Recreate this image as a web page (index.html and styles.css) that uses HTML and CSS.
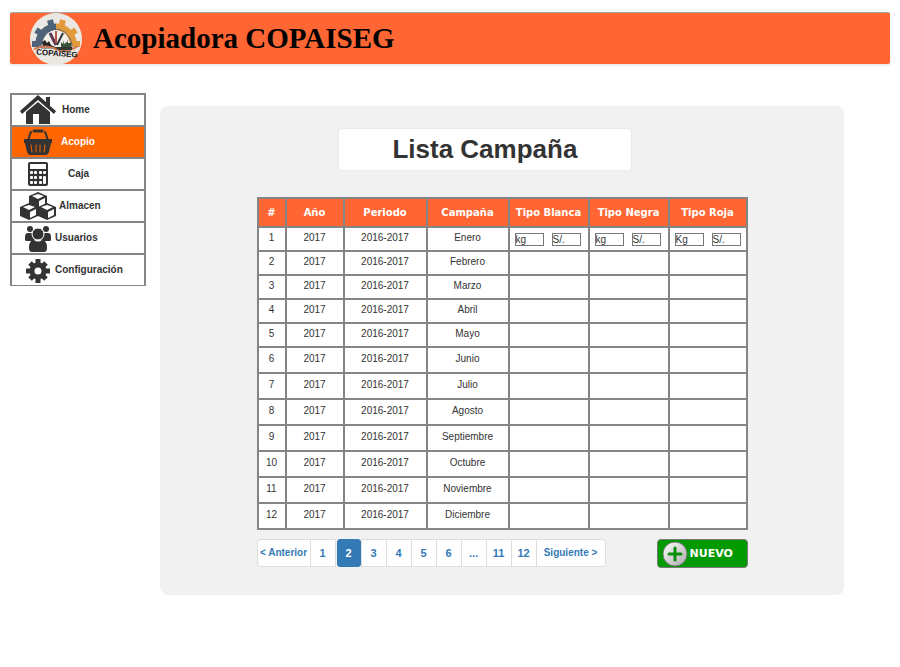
FILE: index.html
```html
<!DOCTYPE html>
<html lang="es">
<head>
<meta charset="utf-8">
<meta name="viewport" content="width=device-width, initial-scale=1">
<title>Acopiadora COPAISEG</title>
<link rel="stylesheet" href="styles.css">
</head>
<body>
<header class="topbar">
  <svg class="logo" viewBox="0 0 52 52" role="img" aria-label="COPAISEG">
    <circle cx="26" cy="26" r="26" fill="#ebe8e3"/>
    <g stroke="#4f6378" fill="none"><path d="M9 33a17 17 0 0 1 17-19" stroke-width="7"/><path d="M9 31H2M12 21L6 17M22 15l-2-8" stroke-width="6"/></g>
    <g stroke="#e39a3c" fill="none"><path d="M26 14a17 17 0 0 1 17 19" stroke-width="7"/><path d="M43 31h7M40 21l6-4M31 15l2-8" stroke-width="6"/></g>
    <path d="M11 35a15 18 0 0 1 31 0z" fill="#f0efe9" stroke="#46566b"/>
    <path d="M28 17a14 17 0 0 1 13 17" fill="none" stroke="#cf8837"/>
    <path d="M20 20l6 12" stroke="#603b55" stroke-width="3"/>
    <path d="M26 18l0 12" stroke="#b5574a" stroke-width="2"/>
    <path d="M33 20l-6 12" stroke="#30343a" stroke-width="2"/>
    <path d="M12 29l3-2 2 3 2-2 2 4 4 2-12 0z" fill="#262626"/>
    <path d="M31 34l0-5 2 2 0-4 1 4 3-2 0-3 1 4 3 0 0 4z" fill="#38533b"/>
    <path d="M4 36q12-5 22 0t22-3" fill="none" stroke="#ce7650" stroke-width="2"/>
    <path d="M24 34l18 0 0 3-13 0z" fill="#303832"/>
    <text class="logo-text" x="6" y="43" transform="rotate(4 26 42)">COPAISEG</text>
  </svg>
  <h1 class="brand">Acopiadora COPAISEG</h1>
</header>
<div class="layout">
  <nav class="menu" aria-label="Principal">
    <a class="item home" href="#">
      <svg class="icon" viewBox="0 0 36 30" aria-hidden="true"><path d="M18 0L0 16l2 3L18 5l16 14 2-3-6-5V2h-4v5z"/><path d="M18 7L6 17v12h7V19h6v10h11V17z"/></svg>
      <span>Home</span></a>
    <a class="item active" href="#" aria-current="page">
      <svg class="icon" viewBox="0 0 36 30" aria-hidden="true"><path d="M8 14l2-7q1-3 4-3h8q3 0 4 3l2 7" fill="none" stroke="currentColor" stroke-width="2"/><rect x="12" y="2" width="12" height="4" rx="2" stroke="#f60"/><path d="M4 12h28v4h-1l-2 9q-1 3-3 3H10q-2 0-3-3L5 16H4z"/><path d="M11 18l1 7M16 18v7M20 18v7M25 18l-1 7" stroke="#f60" stroke-linecap="round"/></svg>
      <span>Acopio</span></a>
    <a class="item caja" href="#">
      <svg class="icon" viewBox="0 0 36 30" aria-hidden="true"><rect x="8" y="3" width="20" height="24" rx="2"/><g fill="#fff"><rect x="10" y="5" width="16" height="5"/><rect x="10" y="12" width="3" height="3" rx="1"/><rect x="14" y="12" width="3" height="3" rx="1"/><rect x="19" y="12" width="3" height="3" rx="1"/><rect x="23" y="12" width="3" height="3" rx="1"/><rect x="10" y="17" width="3" height="3" rx="1"/><rect x="14" y="17" width="3" height="3" rx="1"/><rect x="19" y="17" width="3" height="3" rx="1"/><rect x="10" y="22" width="3" height="3" rx="1"/><rect x="14" y="22" width="3" height="3" rx="1"/><rect x="19" y="22" width="3" height="3" rx="1"/><rect x="23" y="17" width="3" height="8" rx="1"/></g></svg>
      <span>Caja</span></a>
    <a class="item almacen" href="#">
      <svg class="icon" viewBox="0 0 36 30" aria-hidden="true"><defs><g id="cube"><path d="M9 0l9 4v9l-9 4-9-4V4z"/><path d="M9 2l6 2-6 3-6-3z" fill="#fff"/><path d="M10 9l6-3v6l-6 3z" fill="#fff"/></g></defs><use href="#cube" x="9" y="1"/><use href="#cube" x="0" y="12"/><use href="#cube" x="18" y="12"/></svg>
      <span>Almacen</span></a>
    <a class="item usuarios" href="#">
      <svg class="icon" viewBox="0 0 36 30" aria-hidden="true"><circle cx="11" cy="6" r="3"/><circle cx="27" cy="6" r="3"/><path d="M7 18q-1 0-1-2v-2q0-4 3-4h4q0 5 3 7l-2 1zM31 18q1 0 1-2v-2q0-4-3-4h-4q0 5-3 7l2 1z"/><circle cx="19" cy="11" r="6" stroke="#fff"/><path d="M10 25q0-8 5-8 4 3 8 0 5 0 5 8 0 4-3 4H13q-3 0-3-4z"/></svg>
      <span>Usuarios</span></a>
    <a class="item config" href="#">
      <svg class="icon" viewBox="0 0 36 30" aria-hidden="true"><g fill="none" stroke="currentColor"><circle cx="19" cy="16" r="6" stroke-width="5"/><path d="M19 4v5M19 23v5M7 16h5M26 16h5M11 8l3 3M24 21l3 3M27 8l-3 3M14 21l-3 3" stroke-width="5"/></g></svg>
      <span>Configuración</span></a>
  </nav>
  <main class="panel">
    <h2 class="title">Lista Campaña</h2>
    <div class="content">
      <table class="grid">
        <colgroup><col class="c-num"><col class="c-year"><col class="c-period"><col class="c-camp"><col class="c-type"><col class="c-type"><col class="c-last"></colgroup>
        <thead><tr><th>#</th><th>Año</th><th>Periodo</th><th>Campaña</th><th>Tipo Blanca</th><th>Tipo Negra</th><th>Tipo Roja</th></tr></thead>
        <tbody>
          <tr><td>1</td><td>2017</td><td>2016-2017</td><td>Enero</td>
            <td><div class="pair"><input value="kg" aria-label="Tipo Blanca, kg"><input value="S/." aria-label="Tipo Blanca, soles"></div></td>
            <td><div class="pair"><input value="kg" aria-label="Tipo Negra, kg"><input value="S/." aria-label="Tipo Negra, soles"></div></td>
            <td><div class="pair"><input value="Kg" aria-label="Tipo Roja, kg"><input value="S/." aria-label="Tipo Roja, soles"></div></td></tr>
          <tr><td>2</td><td>2017</td><td>2016-2017</td><td>Febrero</td><td></td><td></td><td></td></tr>
          <tr><td>3</td><td>2017</td><td>2016-2017</td><td>Marzo</td><td></td><td></td><td></td></tr>
          <tr><td>4</td><td>2017</td><td>2016-2017</td><td>Abril</td><td></td><td></td><td></td></tr>
          <tr><td>5</td><td>2017</td><td>2016-2017</td><td>Mayo</td><td></td><td></td><td></td></tr>
        </tbody>
        <tbody class="tall">
          <tr><td>6</td><td>2017</td><td>2016-2017</td><td>Junio</td><td></td><td></td><td></td></tr>
          <tr><td>7</td><td>2017</td><td>2016-2017</td><td>Julio</td><td></td><td></td><td></td></tr>
          <tr><td>8</td><td>2017</td><td>2016-2017</td><td>Agosto</td><td></td><td></td><td></td></tr>
          <tr><td>9</td><td>2017</td><td>2016-2017</td><td>Septiembre</td><td></td><td></td><td></td></tr>
          <tr><td>10</td><td>2017</td><td>2016-2017</td><td>Octubre</td><td></td><td></td><td></td></tr>
          <tr><td>11</td><td>2017</td><td>2016-2017</td><td>Noviembre</td><td></td><td></td><td></td></tr>
          <tr><td>12</td><td>2017</td><td>2016-2017</td><td>Diciembre</td><td></td><td></td><td></td></tr>
        </tbody>
      </table>
      <div class="actions">
        <nav class="pages" aria-label="Páginas">
          <a class="prev" href="#">&lt; Anterior</a><a href="#">1</a><a class="current" href="#" aria-current="page">2</a><a href="#">3</a><a href="#">4</a><a href="#">5</a><a href="#">6</a><a href="#">...</a><a href="#">11</a><a href="#">12</a><a class="next" href="#">Siguiente &gt;</a>
        </nav>
        <button class="new" type="button">
          <svg class="plus" viewBox="0 0 26 26" aria-hidden="true"><defs><linearGradient id="metal" x1="0" y1="0" x2="1" y2="1"><stop offset="0" stop-color="#fff"/><stop offset="1" stop-color="#aaa"/></linearGradient></defs><circle cx="13" cy="13" r="12" fill="url(#metal)" stroke="#777"/><path d="M13 7v12M7 13h12" stroke="#0a8f0a" stroke-width="3" stroke-linecap="round"/></svg>
          NUEVO</button>
      </div>
    </div>
  </main>
</div>
</body>
</html>
```
FILE: styles.css
```css
* { box-sizing: border-box; }

body {
  margin: 0;
  padding: 12px 10px;
  background: #fff;
  color: #333;
  font-family: "Liberation Sans", Arial, sans-serif;
  font-size: 10px;
}

a { color: inherit; text-decoration: none; }

.topbar {
  display: flex;
  align-items: center;
  gap: 11px;
  height: 52px;
  padding-left: 20px;
  background: #ff6633;
  border-top: 1px solid #aaa;
  border-radius: 2px;
  box-shadow: 0 1px 3px #ddd;
}

.logo { width: 52px; height: 52px; }
.logo-text { font: bold 8px "Liberation Sans", sans-serif; fill: #111; }

.brand {
  margin: 0;
  color: #000;
  font: bold 29px "Liberation Serif", "Times New Roman", serif;
}

.layout {
  display: flex;
  align-items: flex-start;
  gap: 14px;
  padding: 29px 46px 0 0;
}

.menu {
  flex: none;
  width: 136px;
  border: solid #858585;
  border-width: 0 2px 1px;
}

.item {
  display: flex;
  align-items: center;
  gap: 6px;
  height: 32px;
  padding-left: 8px;
  border-top: 2px solid #858585;
  font-weight: bold;
}

.item span { padding-bottom: 2px; }
.item.active { gap: 5px; background: #f60; }
.item.active span { color: #fff; }
.item.caja { gap: 12px; }
.item.almacen { gap: 3px; }
.item.usuarios, .item.config { gap: 0; padding-left: 7px; }
.icon { flex: none; width: 36px; height: 30px; fill: currentColor; }

.panel {
  flex: 1;
  min-width: 0;
  margin-top: 13px;
  padding: 22px 0 27px;
  background: #f1f1f1;
  border-radius: 8px;
}

.title {
  width: 43%;
  margin: 0 auto 26px 26%;
  padding: 5px 0;
  background: #fff;
  border: 1px solid #e9e9e9;
  border-radius: 4px;
  font-size: 26px;
  line-height: 31px;
  text-align: center;
}

.content { width: 491px; margin: 0 auto; }

.grid {
  width: 100%;
  table-layout: fixed;
  border-collapse: collapse;
  background: #fff;
}

.grid th, .grid td {
  padding: 0;
  border: 2px solid #858585;
  text-align: center;
}

.grid th {
  height: 29px;
  background: #ff6633;
  color: #fff;
  font-family: "DejaVu Sans", sans-serif;
  font-weight: bold;
  white-space: nowrap;
}

.grid td { height: 24px; padding-bottom: 4px; }
.grid .tall td { height: 26px; padding-bottom: 3px; }
.c-num { width: 28px; }
.c-year { width: 58px; }
.c-period { width: 83px; }
.c-camp { width: 82px; }
.c-type { width: 80px; }
.c-last { width: 78px; }

.pair {
  display: flex;
  gap: 8px;
  padding: 4px 0 0 5px;
}

.pair input {
  width: 29px;
  height: 13px;
  padding: 0;
  background: #fff;
  border: 1px solid #797979;
  color: #333;
  font: 10px/11px "Liberation Sans", Arial, sans-serif;
}

.actions {
  display: flex;
  justify-content: space-between;
  margin-top: 9px;
}

.pages { display: flex; }

.pages a {
  width: 26px;
  height: 28px;
  margin-right: -1px;
  background: #fff;
  border: 1px solid #ddd;
  color: #337ab7;
  font-size: 11px;
  font-weight: bold;
  line-height: 26px;
  text-align: center;
}

.pages .current {
  width: 24px;
  margin: 0 0 0 2px;
  background: #337ab7;
  border-color: #337ab7;
  border-radius: 3px;
  color: #fff;
}

.pages .prev { width: 54px; border-radius: 4px 0 0 4px; font-size: 10px; }
.pages .next { width: 70px; margin-right: 0; border-radius: 0 4px 4px 0; font-size: 10px; }

.new {
  display: flex;
  align-items: center;
  gap: 2px;
  width: 91px;
  height: 29px;
  padding: 0 0 0 4px;
  background: #090;
  border: 1px solid #797979;
  border-radius: 4px;
  color: #fff;
  font: bold 11px "DejaVu Sans", sans-serif;
}

.plus { width: 26px; height: 26px; }
```
